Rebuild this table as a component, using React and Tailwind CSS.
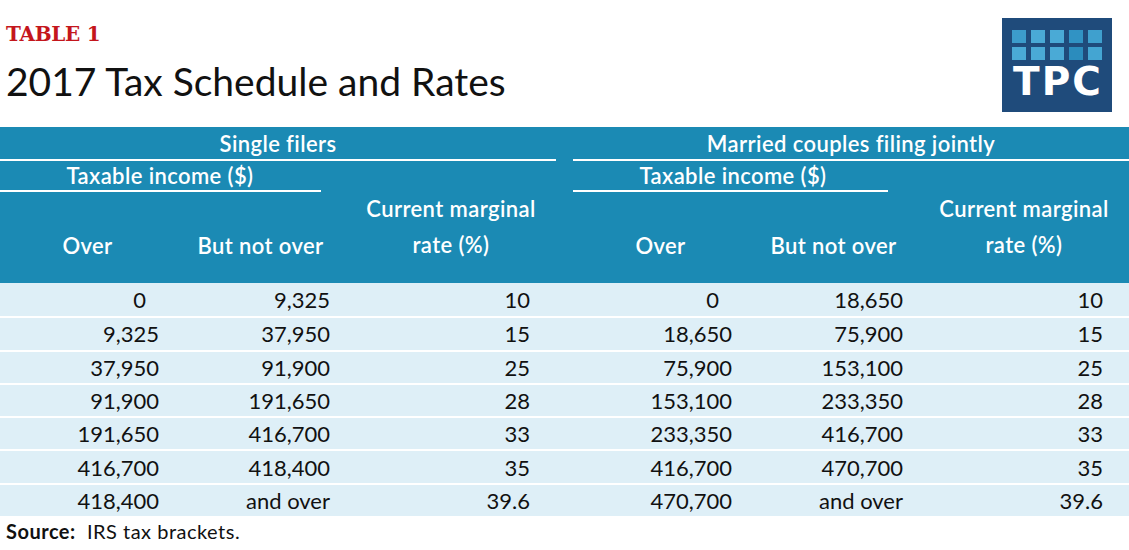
import React from "react";

const single = [
  ["0", "9,325", "10"],
  ["9,325", "37,950", "15"],
  ["37,950", "91,900", "25"],
  ["91,900", "191,650", "28"],
  ["191,650", "416,700", "33"],
  ["416,700", "418,400", "35"],
  ["418,400", "and over", "39.6"],
];
const married = [
  ["0", "18,650", "10"],
  ["18,650", "75,900", "15"],
  ["75,900", "153,100", "25"],
  ["153,100", "233,350", "28"],
  ["233,350", "416,700", "33"],
  ["416,700", "470,700", "35"],
  ["470,700", "and over", "39.6"],
];

function Logo() {
  const row1 = ["#3c9ccb", "#4aaad6", "#4aaad6", "#3193c4", "#3fa0ce"];
  const row2 = ["#4aaad6", "#4aaad6", "#4aaad6", "#2b8cbd", "#44a5d2"];
  return (
    <div className="w-[110px] h-[94px] bg-[#1f4b7b] flex flex-col items-center pt-[12px]">
      <div className="grid grid-cols-5 gap-x-[5.5px] gap-y-[4px]">
        {[...row1, ...row2].map((c, i) => (
          <div key={i} className="w-[13.5px] h-[13px]" style={{ background: c }} />
        ))}
      </div>
      <div className="text-white font-bold text-[39px] leading-[38px] mt-[3px] tracking-[2px] mr-[-2px] font-['DejaVu_Sans',sans-serif]">
        TPC
      </div>
    </div>
  );
}

function HeadSection({ title, lineToEdge }) {
  return (
    <div className="w-[556px] flex flex-col">
      <div className="h-[32px] flex items-center justify-center">{title}</div>
      <div className="h-[2px] bg-white" />
      <div className="flex">
        <div className="w-[346px] flex flex-col">
          <div className="h-[29px] flex items-center justify-center pr-[26px]">Taxable income ($)</div>
          <div className={"h-[2px] bg-white " + (lineToEdge ? "w-[321px]" : "w-[315px]")} />
          <div className="flex h-[91px]">
            <div className="w-[175px] text-center leading-[36px] pt-[36px]">Over</div>
            <div className="w-[171px] text-center leading-[36px] pt-[36px]">But not over</div>
          </div>
        </div>
        <div className="w-[210px] text-center leading-[36px] pt-[30px]">
          Current marginal
          <br />
          rate (%)
        </div>
      </div>
    </div>
  );
}

function DataSection({ rows, i }) {
  const r = rows[i];
  return (
    <div className="w-[556px] grid grid-cols-[175px_171px_210px] text-right">
      <div className={i === 0 ? "pr-[29px]" : "pr-[16px]"}>{r[0]}</div>
      <div className="pr-[16px]">{r[1]}</div>
      <div className="pr-[26px]">{r[2]}</div>
    </div>
  );
}

export default function App() {
  return (
    <div className="w-[1129px] h-[550px] bg-white font-['Lato',sans-serif] text-[#111] overflow-hidden">
      <div className="flex justify-between h-[127px]">
        <div className="pl-[6px] pt-[22px]">
          <div className="font-['DejaVu_Serif',serif] font-bold text-[#c4161c] text-[20px] leading-[24px] tracking-[-0.3px]">
            TABLE 1
          </div>
          <div className="text-[39px] leading-[46px] mt-[12px]">2017 Tax Schedule and Rates</div>
        </div>
        <div className="pt-[18px] pr-[17px]">
          <Logo />
        </div>
      </div>
      <div className="bg-[#1b8ab4] text-white text-[22px] tracking-[0.4px] font-semibold flex gap-[17px] h-[156px]">
        <HeadSection title="Single filers" lineToEdge />
        <HeadSection title="Married couples filing jointly" />
      </div>
      <div className="bg-[#deeff7] text-[22px]">
        {single.map((_, i) => (
          <div
            key={i}
            className={"flex gap-[17px] items-center h-[33.3px] " + (i > 0 ? "border-t-2 border-white" : "")}
          >
            <DataSection rows={single} i={i} />
            <DataSection rows={married} i={i} />
          </div>
        ))}
      </div>
      <div className="pl-[6px] pt-[3px] text-[20px] leading-[24px] tracking-[0.5px]">
        <span className="font-bold">Source:</span>
        <span>{"\u00a0 IRS tax brackets."}</span>
      </div>
    </div>
  );
}
